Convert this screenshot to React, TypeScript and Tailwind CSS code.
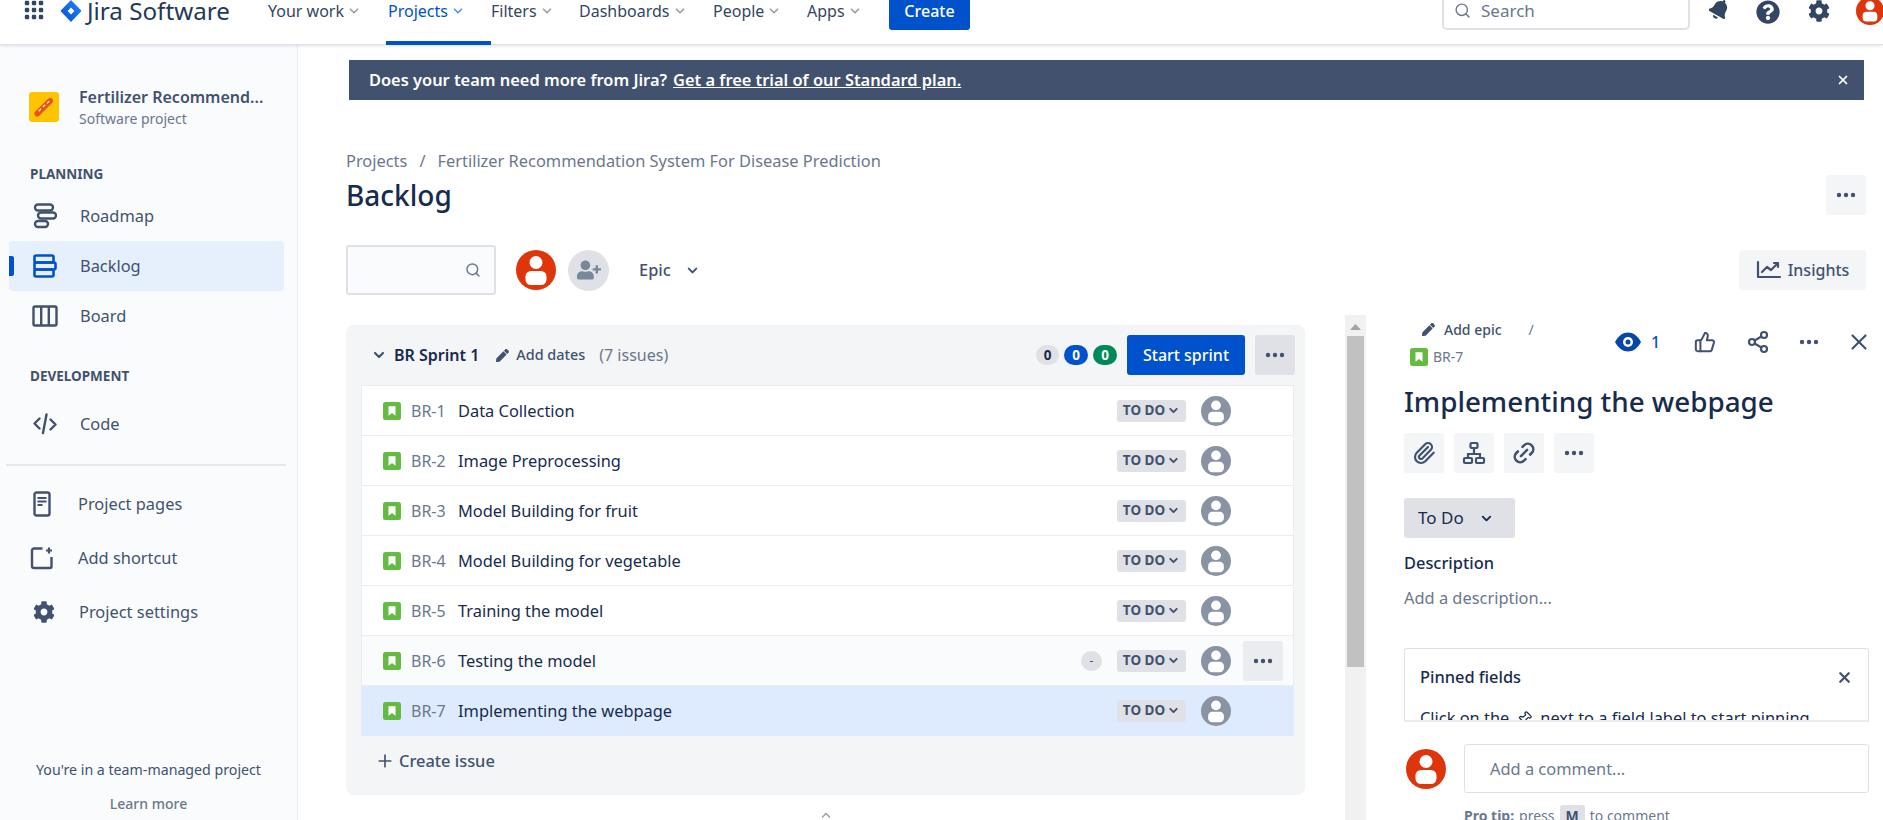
import React from "react";
import { ChevronDown, Search, Plus, X, ThumbsUp, Share2, Paperclip, Link2, Pin } from "lucide-react";
import { FaBell, FaCog, FaPen, FaQuestionCircle, FaUserPlus } from "react-icons/fa";

const FONT = "font-['Noto_Sans','Open_Sans',sans-serif]";

function Avatar({ size, color }: { size: number; color: string }) {
  return (
    <svg width={size} height={size} viewBox="0 0 40 40" className="shrink-0">
      <circle cx="20" cy="20" r="20" fill={color} />
      <circle cx="20" cy="12.5" r="6.5" fill="#fff" />
      <rect x="9.5" y="21" width="21" height="14" rx="5.5" fill="#fff" />
    </svg>
  );
}

function Dots({ color = "#42526E" }: { color?: string }) {
  return (
    <svg width="24" height="24" viewBox="0 0 24 24">
      <circle cx="5" cy="12" r="2.2" fill={color} />
      <circle cx="12" cy="12" r="2.2" fill={color} />
      <circle cx="19" cy="12" r="2.2" fill={color} />
    </svg>
  );
}

function EyeIcon() {
  return (
    <svg width="26" height="20" viewBox="0 0 26 20" className="shrink-0">
      <path d="M0 10C3.500 3.500 8 0.500 13 0.500S22.500 3.500 26 10c-3.500 6.500-8 9.500-13 9.500S3.500 16.500 0 10z" fill="#0747A6" />
      <circle cx="13" cy="10" r="5" fill="#fff" />
      <circle cx="13" cy="10" r="2.500" fill="#0747A6" />
    </svg>
  );
}

function StoryIcon() {
  return (
    <svg width="18" height="18" viewBox="0 0 18 18" className="shrink-0">
      <rect width="18" height="18" rx="2.5" fill="#65BA43" />
      <path d="M5.5 4.2h7v9.6L9 10.9l-3.5 2.9z" fill="#fff" />
    </svg>
  );
}

function JiraMark() {
  return (
    <svg width="22" height="22" viewBox="0 0 22 22" className="shrink-0">
      <defs>
        <linearGradient id="jm" x1="1" y1="0" x2="0" y2="1">
          <stop offset="0" stopColor="#2684FF" />
          <stop offset="1" stopColor="#0052CC" />
        </linearGradient>
      </defs>
      <path fillRule="evenodd" d="M11 0l10 10.2a1 1 0 010 1.4L11 22 1 11.6a1 1 0 010-1.4L11 0zm0 7.4L7.6 10.9 11 14.4l3.4-3.5L11 7.4z" fill="url(#jm)" />
    </svg>
  );
}

function GridIcon() {
  const c = [3, 10, 17];
  return (
    <svg width="21" height="21" viewBox="0 0 21 21" className="shrink-0">
      {c.map((y) => c.map((x) => <rect key={`${x}-${y}`} x={x - 2.2} y={y - 2.2} width="4.4" height="4.4" rx="1.2" fill="#344563" />))}
    </svg>
  );
}

function RoadmapIcon() {
  return (
    <svg width="24" height="26" viewBox="0 0 24 26" fill="none" stroke="#42526E" strokeWidth="2.4">
      <rect x="2" y="1.5" width="18" height="6" rx="3" />
      <rect x="5" y="9.5" width="18" height="6" rx="3" />
      <rect x="2" y="18" width="13" height="6" rx="3" />
    </svg>
  );
}

function BacklogIcon() {
  return (
    <svg width="24" height="24" viewBox="0 0 24 24" fill="none" stroke="#0052CC" strokeWidth="2.6">
      <rect x="1.5" y="1.5" width="19" height="7" rx="1.5" />
      <rect x="1.5" y="8.5" width="21" height="7" rx="1.5" />
      <rect x="1.5" y="15.5" width="19" height="7" rx="1.5" />
    </svg>
  );
}

function BoardIcon() {
  return (
    <svg width="26" height="22" viewBox="0 0 26 22" fill="none" stroke="#42526E" strokeWidth="2.4">
      <rect x="1.5" y="1.5" width="23" height="19" rx="1.5" />
      <path d="M9.2 1.5v19M16.8 1.5v19" />
    </svg>
  );
}

function CodeIcon() {
  return (
    <svg width="24" height="22" viewBox="0 0 24 22" fill="none" stroke="#42526E" strokeWidth="2.4" strokeLinecap="round" strokeLinejoin="round">
      <path d="M6.5 5.5L1.5 10.5l5 5M17.5 6.5l5 5-5 5M13.5 1.5L10 20" />
    </svg>
  );
}

function PagesIcon() {
  return (
    <svg width="18" height="26" viewBox="0 0 18 26" fill="none" stroke="#42526E" strokeWidth="2.4">
      <rect x="1.5" y="1.5" width="15" height="23" rx="2" />
      <path d="M4.5 7h9M4.5 10.5h9M4.5 14h5" strokeWidth="1.8" />
    </svg>
  );
}

function ShortcutIcon() {
  return (
    <svg width="24" height="24" viewBox="0 0 24 24" fill="none" stroke="#42526E" strokeWidth="2.4">
      <path d="M12.5 2.5H4a2 2 0 00-2 2V20a2 2 0 002 2h16a1.500 1.500 0 001.500-1.500V11" />
      <path d="M19 1.500v6M16 4.500h6" strokeWidth="2.200" />
    </svg>
  );
}

function HierarchyIcon() {
  return (
    <svg width="24" height="24" viewBox="0 0 24 24" fill="none" stroke="#42526E" strokeWidth="2.2">
      <rect x="8.500" y="2" width="7" height="5" rx="1" />
      <rect x="2" y="17" width="8" height="5" rx="1" />
      <rect x="14" y="17" width="8" height="5" rx="1" />
      <path d="M12 7v6M6 17v-4h12v4" />
    </svg>
  );
}

function NavItem({ label, active }: { label: string; active?: boolean }) {
  return (
    <div className={`relative flex items-center gap-[3px] h-[22px] text-[16px] ${active ? "text-[#0052CC]" : "text-[#344563]"}`}>
      <span>{label}</span>
      <ChevronDown size={14} strokeWidth={3} className={active ? "text-[#4C9AFF]" : "text-[#97A0AF]"} />
      {active && <div className="absolute left-[-2px] right-0 top-[41px] h-[4px] bg-[#0052CC]" />}
    </div>
  );
}

function SideItem({ icon, label, active }: { icon: React.ReactNode; label: string; active?: boolean }) {
  return (
    <div className={`relative flex items-center h-[50px] rounded-[4px] ${active ? "bg-[#E6EFFC]" : ""}`}>
      {active && <div className="absolute left-0 top-[15px] h-[20px] w-[5px] rounded-r-[2px] bg-[#0052CC]" />}
      <div className="w-[71px] flex justify-center shrink-0">{icon}</div>
      <span className="text-[16.4px] text-[#42526E]">{label}</span>
    </div>
  );
}

const issues = [
  "Data Collection",
  "Image Preprocessing",
  "Model Building for fruit",
  "Model Building for vegetable",
  "Training the model",
  "Testing the model",
  "Implementing the webpage",
];

function IssueRow({ n, title }: { n: number; title: string }) {
  const selected = n === 7;
  const hover = n === 6;
  return (
    <div className={`relative flex items-center h-[50px] pl-[21px] border-b ${selected ? "bg-[#DEEBFF] border-[#DEEBFF]" : hover ? "bg-[#FAFBFC] border-[#EBECF0]" : "bg-white border-[#EBECF0]"}`}>
      <StoryIcon />
      <span className="ml-[10px] pt-[1px] text-[16px] text-[#6B778C] w-[47px] shrink-0">BR-{n}</span>
      <span className="pt-[1px] text-[16.4px] text-[#172B4D]">{title}</span>
      <div className="ml-auto flex items-center">
        {hover && (
          <div className="mr-[15px] w-[21px] h-[20px] rounded-full bg-[#DFE1E6] flex items-center justify-center text-[12px] text-[#42526E]">-</div>
        )}
        <div className="flex items-center justify-center gap-[2px] w-[69px] h-[22px] rounded-[3px] bg-[#DFE1E6] text-[13.500px] font-bold text-[#42526E]">
          TO DO
          <ChevronDown size={13} strokeWidth={3.5} />
        </div>
        <div className="ml-[15px]"><Avatar size={30} color="#8993A4" /></div>
        <div className="w-[62px] flex justify-end pr-[10px]">
          {hover && (
            <div className="w-[40px] h-[40px] rounded-[3px] bg-[#EBECF0] flex items-center justify-center"><Dots /></div>
          )}
        </div>
      </div>
    </div>
  );
}

function Count({ bg, fg, w, v }: { bg: string; fg: string; w: string; v: string }) {
  return (
    <div className={`h-[20px] rounded-full flex items-center justify-center text-[13.500px] font-bold ${bg} ${fg} ${w}`}>{v}</div>
  );
}

function ToolBtn({ children }: { children: React.ReactNode }) {
  return <div className="w-[40px] h-[40px] rounded-[3px] bg-[#F4F5F7] flex items-center justify-center">{children}</div>;
}

export default function App() {
  return (
    <div className={`${FONT} w-[1883px] h-[820px] overflow-hidden bg-white flex flex-col`}>
      <header className="relative z-10 h-[45px] shrink-0 bg-white border-b border-[#DFE1E6] shadow-[0_1px_3px_rgba(9,30,66,0.13)] flex items-start">
        <div className="ml-[24px]"><GridIcon /></div>
        <div className="ml-[15px]"><JiraMark /></div>
        <div className="ml-[5px] h-[22px] w-[145px] flex items-center text-[24.2px] text-[#253858] whitespace-nowrap">Jira Software</div>
        <div className="ml-[36px] flex items-start">
          <div className="w-[120px]"><NavItem label="Your work" /></div>
          <div className="w-[103px]"><NavItem label="Projects" active /></div>
          <div className="w-[88px]"><NavItem label="Filters" /></div>
          <div className="w-[134px]"><NavItem label="Dashboards" /></div>
          <div className="w-[94px]"><NavItem label="People" /></div>
          <div className="w-[82px]"><NavItem label="Apps" /></div>
        </div>
        <div className="w-[81px] h-[30px] rounded-b-[3px] bg-[#0052CC] text-white text-[16px] font-medium flex items-center justify-center pb-[8px]">Create</div>
        <div className="ml-auto flex items-start">
          <div className="w-[248px] h-[30px] rounded-b-[5px] border-x-2 border-b-2 border-[#DFE1E6] flex items-center pb-[7px] pl-[10px] text-[#6B778C]">
            <Search size={17} strokeWidth={2} />
            <span className="ml-[10px] text-[17px]">Search</span>
          </div>
          <div className="ml-[19px] w-[22px] rotate-[30deg] mt-[-1px]"><FaBell size={21} color="#344563" /></div>
          <div className="ml-[25px]"><FaQuestionCircle size={24} color="#344563" /></div>
          <div className="ml-[28px]"><FaCog size={22} color="#344563" /></div>
          <div className="ml-[26px] w-[27px] h-[26px] overflow-hidden"><div className="mt-[-3px]"><Avatar size={28} color="#DE350B" /></div></div>
        </div>
      </header>

      <div className="flex-1 flex min-h-0">
        <aside className="w-[298px] shrink-0 h-full bg-[#FAFBFC] border-r border-[#EBECF0] flex flex-col">
          <div className="mt-[40px] ml-[29px] flex items-center">
            <div className="w-[30px] h-[30px] rounded-[3px] bg-[#FFC400] flex items-center justify-center">
              <svg width="26" height="26" viewBox="0 0 22 22">
                <path d="M3.500 15L14.500 4c2.500-2 5.500 1 3.500 3.500L7 18.500c-2.500 2-5.500-1-3.500-3.500z" fill="#E5521A" />
                <path d="M6.500 14.500l2-2M10 11l2-2M13.500 8l2-2" stroke="#FFE3C2" strokeWidth="1.200" />
              </svg>
            </div>
            <div className="ml-[20px] flex flex-col">
              <span className="text-[16px] font-semibold text-[#42526E] leading-[24px] whitespace-nowrap">Fertilizer Recommend...</span>
              <span className="text-[14px] text-[#6B778C] leading-[20px]">Software project</span>
            </div>
          </div>
          <div className="mt-[36px] ml-[30px] text-[13.500px] font-bold text-[#42526E] leading-[18px]">PLANNING</div>
          <div className="mt-[8px] mx-[9px] w-[275px] flex flex-col">
            <SideItem icon={<RoadmapIcon />} label="Roadmap" />
            <SideItem icon={<BacklogIcon />} label="Backlog" active />
            <SideItem icon={<BoardIcon />} label="Board" />
          </div>
          <div className="mt-[26px] ml-[30px] text-[13.500px] font-bold text-[#42526E] leading-[18px]">DEVELOPMENT</div>
          <div className="mt-[14px] mx-[9px] w-[275px]">
            <SideItem icon={<CodeIcon />} label="Code" />
          </div>
          <div className="mt-[15px] ml-[6px] w-[280px] h-[2px] bg-[#E6E8EC]" />
          <div className="mt-[11px] mx-[9px] w-[275px] flex flex-col">
            <div className="flex items-center h-[54px]"><div className="w-[60px] flex justify-center pl-[6px]"><PagesIcon /></div><span className="ml-[9px] text-[16.4px] text-[#42526E]">Project pages</span></div>
            <div className="flex items-center h-[54px]"><div className="w-[60px] flex justify-center pl-[6px]"><ShortcutIcon /></div><span className="ml-[9px] text-[16.4px] text-[#42526E]">Add shortcut</span></div>
            <div className="flex items-center h-[54px]"><div className="w-[60px] flex justify-center pl-[10px]"><FaCog size={22} color="#42526E" /></div><span className="ml-[10px] text-[16.4px] text-[#42526E]">Project settings</span></div>
          </div>
          <div className="mt-auto mb-[6px] flex flex-col items-center">
            <span className="text-[14.200px] text-[#42526E] leading-[20px]">You're in a team-managed project</span>
            <span className="mt-[14px] text-[14px] font-medium text-[#6B778C] leading-[20px]">Learn more</span>
          </div>
        </aside>

        <main className="flex-1 min-w-0 flex flex-col">
          <div className="mt-[15px] ml-[51px] w-[1515px] h-[40px] shrink-0 bg-[#42526E] text-white flex items-center pl-[20px] pr-[14px]">
            <span className="text-[16.4px] font-semibold">Does your team need more from Jira?</span>
            <span className="ml-[6px] text-[16.4px] font-semibold underline">Get a free trial of our Standard plan.</span>
            <X size={14} strokeWidth={3} className="ml-auto" />
          </div>
          <div className="ml-[48px] mr-[17px] mt-[49px] shrink-0">
            <div className="h-[24px] flex items-center text-[16.4px] text-[#6B778C]">
              <span>Projects</span><span className="mx-[12px]">/</span><span>Fertilizer Recommendation System For Disease Prediction</span>
            </div>
            <div className="mt-[2px] h-[40px] flex items-center justify-between">
              <h1 className="text-[28px] font-medium text-[#172B4D]">Backlog</h1>
              <div className="w-[40px] h-[40px] rounded-[3px] bg-[#F4F5F7] flex items-center justify-center"><Dots /></div>
            </div>
            <div className="mt-[30px] h-[50px] flex items-center">
              <div className="w-[150px] h-[50px] rounded-[3px] border-2 border-[#DFE1E6] bg-[#FAFBFC] flex items-center justify-end pr-[13px] text-[#6B778C]"><Search size={16} strokeWidth={2.2} /></div>
              <div className="ml-[20px]"><Avatar size={40} color="#DE350B" /></div>
              <div className="ml-[12px] w-[41px] h-[41px] rounded-full bg-[#DFE1E6] flex items-center justify-center"><FaUserPlus size={24} color="#7A869A" /></div>
              <span className="ml-[30px] text-[16.4px] font-medium text-[#42526E]">Epic</span>
              <ChevronDown size={15} strokeWidth={3.2} color="#42526E" className="ml-[14px]" />
              <div className="ml-auto w-[127px] h-[40px] rounded-[3px] bg-[#F4F5F7] flex items-center justify-center gap-[6px] text-[16px] font-medium text-[#42526E]">
                <svg width="26" height="20" viewBox="0 0 26 20" fill="none" stroke="#42526E" strokeWidth="2.200" strokeLinecap="round" strokeLinejoin="round"><path d="M2 2v15h22M6 12l5-5 4 3 7-7M18 3h4v4" /></svg>
                Insights
              </div>
            </div>
          </div>
          <div className="mt-[20px] flex-1 min-h-0 flex items-start overflow-hidden">
            <div className="ml-[48px] w-[959px] shrink-0 pt-[10px]">
              <div className="rounded-[8px] bg-[#F4F5F7] h-[470px] pt-[10px] pl-[15px] pr-[11px]">
                <div className="h-[40px] flex items-center">
                  <ChevronDown size={16} strokeWidth={3.2} color="#42526E" className="ml-[10px]" />
                  <span className="ml-[7px] text-[16px] font-semibold text-[#172B4D]">BR Sprint 1</span>
                  <FaPen size={13} color="#42526E" className="ml-[17px]" />
                  <span className="ml-[7px] text-[14.4px] font-medium text-[#42526E]">Add dates</span>
                  <span className="ml-[14px] text-[16px] text-[#6B778C]">(7 issues)</span>
                  <div className="ml-auto flex items-center">
                    <Count bg="bg-[#DFE1E6]" fg="text-[#172B4D]" w="w-[23px]" v="0" />
                    <div className="w-[5px]" />
                    <Count bg="bg-[#0052CC]" fg="text-white" w="w-[24px]" v="0" />
                    <div className="w-[5px]" />
                    <Count bg="bg-[#00875A]" fg="text-white" w="w-[24px]" v="0" />
                    <div className="ml-[10px] w-[118px] h-[40px] rounded-[3px] bg-[#0052CC] text-white text-[16px] font-medium flex items-center justify-center">Start sprint</div>
                    <div className="ml-[10px] mr-[-1px] w-[40px] h-[40px] rounded-[3px] bg-[#DFE1E6] flex items-center justify-center"><Dots /></div>
                  </div>
                </div>
                <div className="mt-[10px] border-t border-x border-[#EBECF0]">
                  {issues.map((t, i) => <IssueRow key={t} n={i + 1} title={t} />)}
                </div>
                <div className="mt-[5px] h-[40px] flex items-center text-[16.4px] font-medium text-[#42526E]">
                  <Plus size={20} strokeWidth={2} className="ml-[14px]" />
                  <span className="ml-[4px]">Create issue</span>
                </div>
              </div>
              <div className="mt-[17px] flex justify-center">
                <svg width="10" height="7" viewBox="0 0 10 7" fill="none" stroke="#97A0AF" strokeWidth="1.500"><path d="M1 5.500L5 1.500l4 4" /></svg>
              </div>
            </div>
            <div className="ml-[40px] w-[21px] h-full shrink-0 bg-[#F1F1F1] flex flex-col items-center">
              <svg width="11" height="6" viewBox="0 0 11 6" className="mt-[9px]"><path d="M5.500 0L11 6H0z" fill="#A3A3A3" /></svg>
              <div className="mt-[6px] w-[17px] h-[331px] bg-[#C1C1C1]" />
            </div>
            <section className="ml-[38px] w-[465px] shrink-0">
              <div className="h-[50px] flex items-start mt-[4px]">
                <div className="flex flex-col">
                  <div className="flex items-center h-[20px] pl-[18px] text-[14px] font-medium text-[#42526E]">
                    <FaPen size={13} />
                    <span className="ml-[9px]">Add epic</span>
                    <span className="ml-[27px] font-normal text-[#6B778C]">/</span>
                  </div>
                  <div className="mt-[7px] flex items-center pl-[6px]">
                    <StoryIcon />
                    <span className="ml-[5px] text-[14px] text-[#6B778C]">BR-7</span>
                  </div>
                </div>
                <div className="ml-auto mt-[10px] flex items-center mr-[-3px]">
                  <EyeIcon />
                  <span className="ml-[10px] text-[16px] font-medium text-[#0052CC] w-[43px]">1</span>
                  <ThumbsUp size={22} strokeWidth={2.2} color="#42526E" />
                  <Share2 size={24} strokeWidth={2.2} color="#42526E" className="ml-[30px]" />
                  <div className="ml-[27px]"><Dots /></div>
                  <X size={26} strokeWidth={2} color="#42526E" className="ml-[25px]" />
                </div>
              </div>
              <h2 className="mt-[13px] h-[40px] flex items-center text-[27.8px] font-medium text-[#172B4D] whitespace-nowrap">Implementing the webpage</h2>
              <div className="mt-[11px] flex gap-[10px]">
                <ToolBtn><Paperclip size={24} strokeWidth={2.2} color="#42526E" /></ToolBtn>
                <ToolBtn><HierarchyIcon /></ToolBtn>
                <ToolBtn><Link2 size={26} strokeWidth={2.4} color="#42526E" className="-rotate-45" /></ToolBtn>
                <ToolBtn><Dots /></ToolBtn>
              </div>
              <div className="mt-[25px] w-[111px] h-[40px] rounded-[3px] bg-[#DFE1E6] flex items-center pl-[14px] text-[17px] text-[#172B4D]">
                To Do
                <ChevronDown size={15} strokeWidth={3} className="ml-[15px]" />
              </div>
              <div className="mt-[13px] h-[24px] flex items-center text-[16.4px] font-medium text-[#172B4D]">Description</div>
              <div className="mt-[11px] h-[24px] flex items-center text-[16.4px] text-[#6B778C]">Add a description...</div>
              <div className="mt-[38px] h-[74px] overflow-hidden rounded-t-[3px] border-x border-t border-[#DFE1E6] border-b-2 border-b-[#EBECF0] pl-[15px] pr-[15px]">
                <div className="mt-[16px] flex items-center justify-between h-[24px]">
                  <span className="text-[16.4px] font-medium text-[#172B4D]">Pinned fields</span>
                  <X size={17} strokeWidth={3.2} color="#42526E" />
                </div>
                <div className="mt-[18px] flex items-center h-[22px] text-[16.4px] text-[#172B4D] whitespace-nowrap">
                  Click on the<Pin size={15} strokeWidth={2} className="mx-[8px] rotate-45" />next to a field label to start pinning
                </div>
              </div>
              <div className="mt-[22px] flex items-start">
                <div className="mt-[5px] ml-[2px]"><Avatar size={40} color="#DE350B" /></div>
                <div className="ml-[18px] flex-1">
                  <div className="h-[49px] rounded-[3px] border border-[#DFE1E6] flex items-center pl-[25px] pt-[2px] text-[16.4px] text-[#6B778C]">Add a comment...</div>
                  <div className="mt-[12px] h-[20px] flex items-center text-[14px] text-[#6B778C] whitespace-nowrap">
                    <span className="font-bold">Pro tip:</span>
                    <span className="ml-[5px]">press</span>
                    <span className="mx-[5px] px-[6px] rounded-[3px] bg-[#DFE1E6] font-bold text-[#42526E]">M</span>
                    <span>to comment</span>
                  </div>
                </div>
              </div>
            </section>
          </div>
        </main>
      </div>
    </div>
  );
}
